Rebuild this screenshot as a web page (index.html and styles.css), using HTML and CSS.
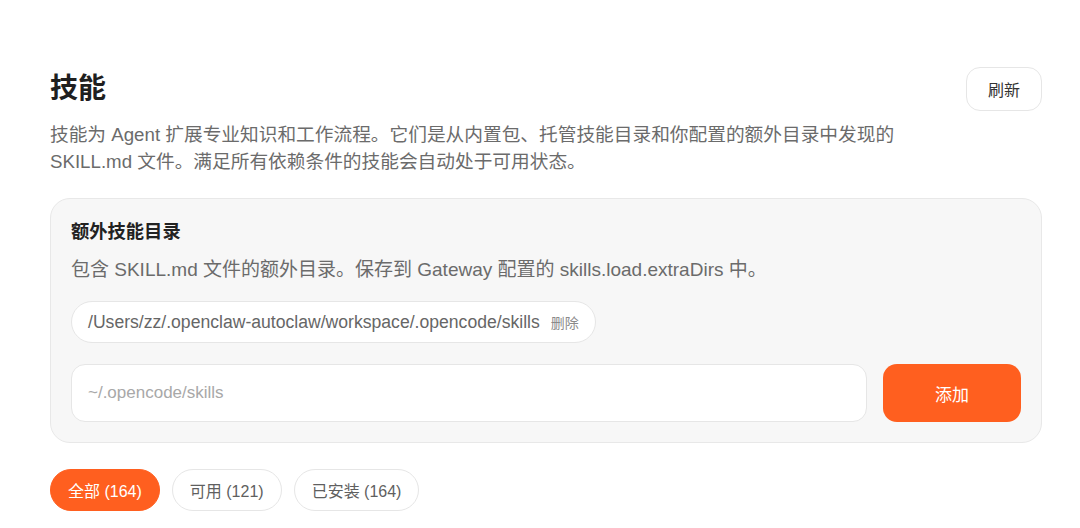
FILE: index.html
```html
<!doctype html>
<html lang="zh-CN">
<head>
  <meta charset="utf-8">
  <title>技能</title>
  <link rel="stylesheet" href="styles.css">
</head>
<body>
  <div class="page">
    <div class="header">
      <h1 class="title">技能</h1>
      <button class="btn-refresh">刷新</button>
    </div>
    <p class="intro">技能为 Agent 扩展专业知识和工作流程。它们是从内置包、托管技能目录和你配置的额外目录中发现的 SKILL.md 文件。满足所有依赖条件的技能会自动处于可用状态。</p>

    <div class="card">
      <div class="card-title">额外技能目录</div>
      <div class="card-desc">包含 SKILL.md 文件的额外目录。保存到 Gateway 配置的 skills.load.extraDirs 中。</div>
      <div class="dir-list">
        <div class="dir-chip">
          <span class="dir-path">/Users/zz/.openclaw-autoclaw/workspace/.opencode/skills</span>
          <span class="dir-remove">删除</span>
        </div>
      </div>
      <div class="add-row">
        <input class="dir-input" type="text" placeholder="~/.opencode/skills">
        <button class="btn-add">添加</button>
      </div>
    </div>

    <div class="filters">
      <button class="filter active">全部 (164)</button>
      <button class="filter">可用 (121)</button>
      <button class="filter">已安装 (164)</button>
    </div>
  </div>
</body>
</html>
```

FILE: styles.css
```css
body {
  margin: 0;
  background: #fff;
  font-family: "Liberation Sans", "Noto Sans CJK SC", sans-serif;
  color: #222;
}

.page {
  padding: 67px 38px 0 50px;
}

.header {
  display: flex;
  justify-content: space-between;
  align-items: center;
}

.title {
  margin: 0;
  font-size: 28px;
  font-weight: 700;
  line-height: 40px;
  color: #1f1f1f;
}

.btn-refresh {
  height: 44px;
  padding: 0 21px;
  border: 1px solid #e6e6e6;
  border-radius: 14px;
  background: #fff;
  font-family: inherit;
  font-size: 16px;
  color: #333;
}

.intro {
  margin: 10px 0 0;
  max-width: 890px;
  font-size: 18.7px;
  line-height: 27px;
  color: #6b6b6b;
}

.card {
  margin-top: 23px;
  padding: 21px 20px 20px;
  border: 1px solid #e8e8e8;
  border-radius: 20px;
  background: #f7f7f7;
}

.card-title {
  font-size: 18.3px;
  font-weight: 700;
  line-height: 24px;
  color: #222;
}

.card-desc {
  margin-top: 12px;
  font-size: 19px;
  line-height: 27px;
  color: #6b6b6b;
}

.dir-list {
  margin-top: 18px;
  display: flex;
}

.dir-chip {
  display: flex;
  align-items: center;
  gap: 11px;
  height: 40px;
  padding: 0 16px;
  border: 1px solid #e6e6e6;
  border-radius: 21px;
  background: #fff;
}

.dir-path {
  font-size: 17.6px;
  color: #666;
}

.dir-remove {
  font-size: 14px;
  color: #8a8a8a;
}

.add-row {
  margin-top: 21px;
  display: flex;
  gap: 16px;
}

.dir-input {
  flex: 1;
  height: 58px;
  box-sizing: border-box;
  padding: 0 16px;
  border: 1px solid #e6e6e6;
  border-radius: 14px;
  background: #fff;
  font-family: inherit;
  font-size: 17px;
  color: #333;
  outline: none;
}

.dir-input::placeholder {
  color: #a8a8a8;
}

.btn-add {
  width: 138px;
  height: 58px;
  border: none;
  border-radius: 14px;
  background: #ff5f1f;
  font-family: inherit;
  font-size: 17px;
  color: #fff;
}

.filters {
  margin-top: 26px;
  display: flex;
  gap: 12px;
}

.filter {
  height: 42px;
  padding: 0 17px;
  border: 1px solid #e6e6e6;
  border-radius: 21px;
  background: #fff;
  font-family: inherit;
  font-size: 16px;
  color: #5f5f5f;
}

.filter.active {
  border-color: #ff5f1f;
  background: #ff5f1f;
  color: #fff;
}
```
